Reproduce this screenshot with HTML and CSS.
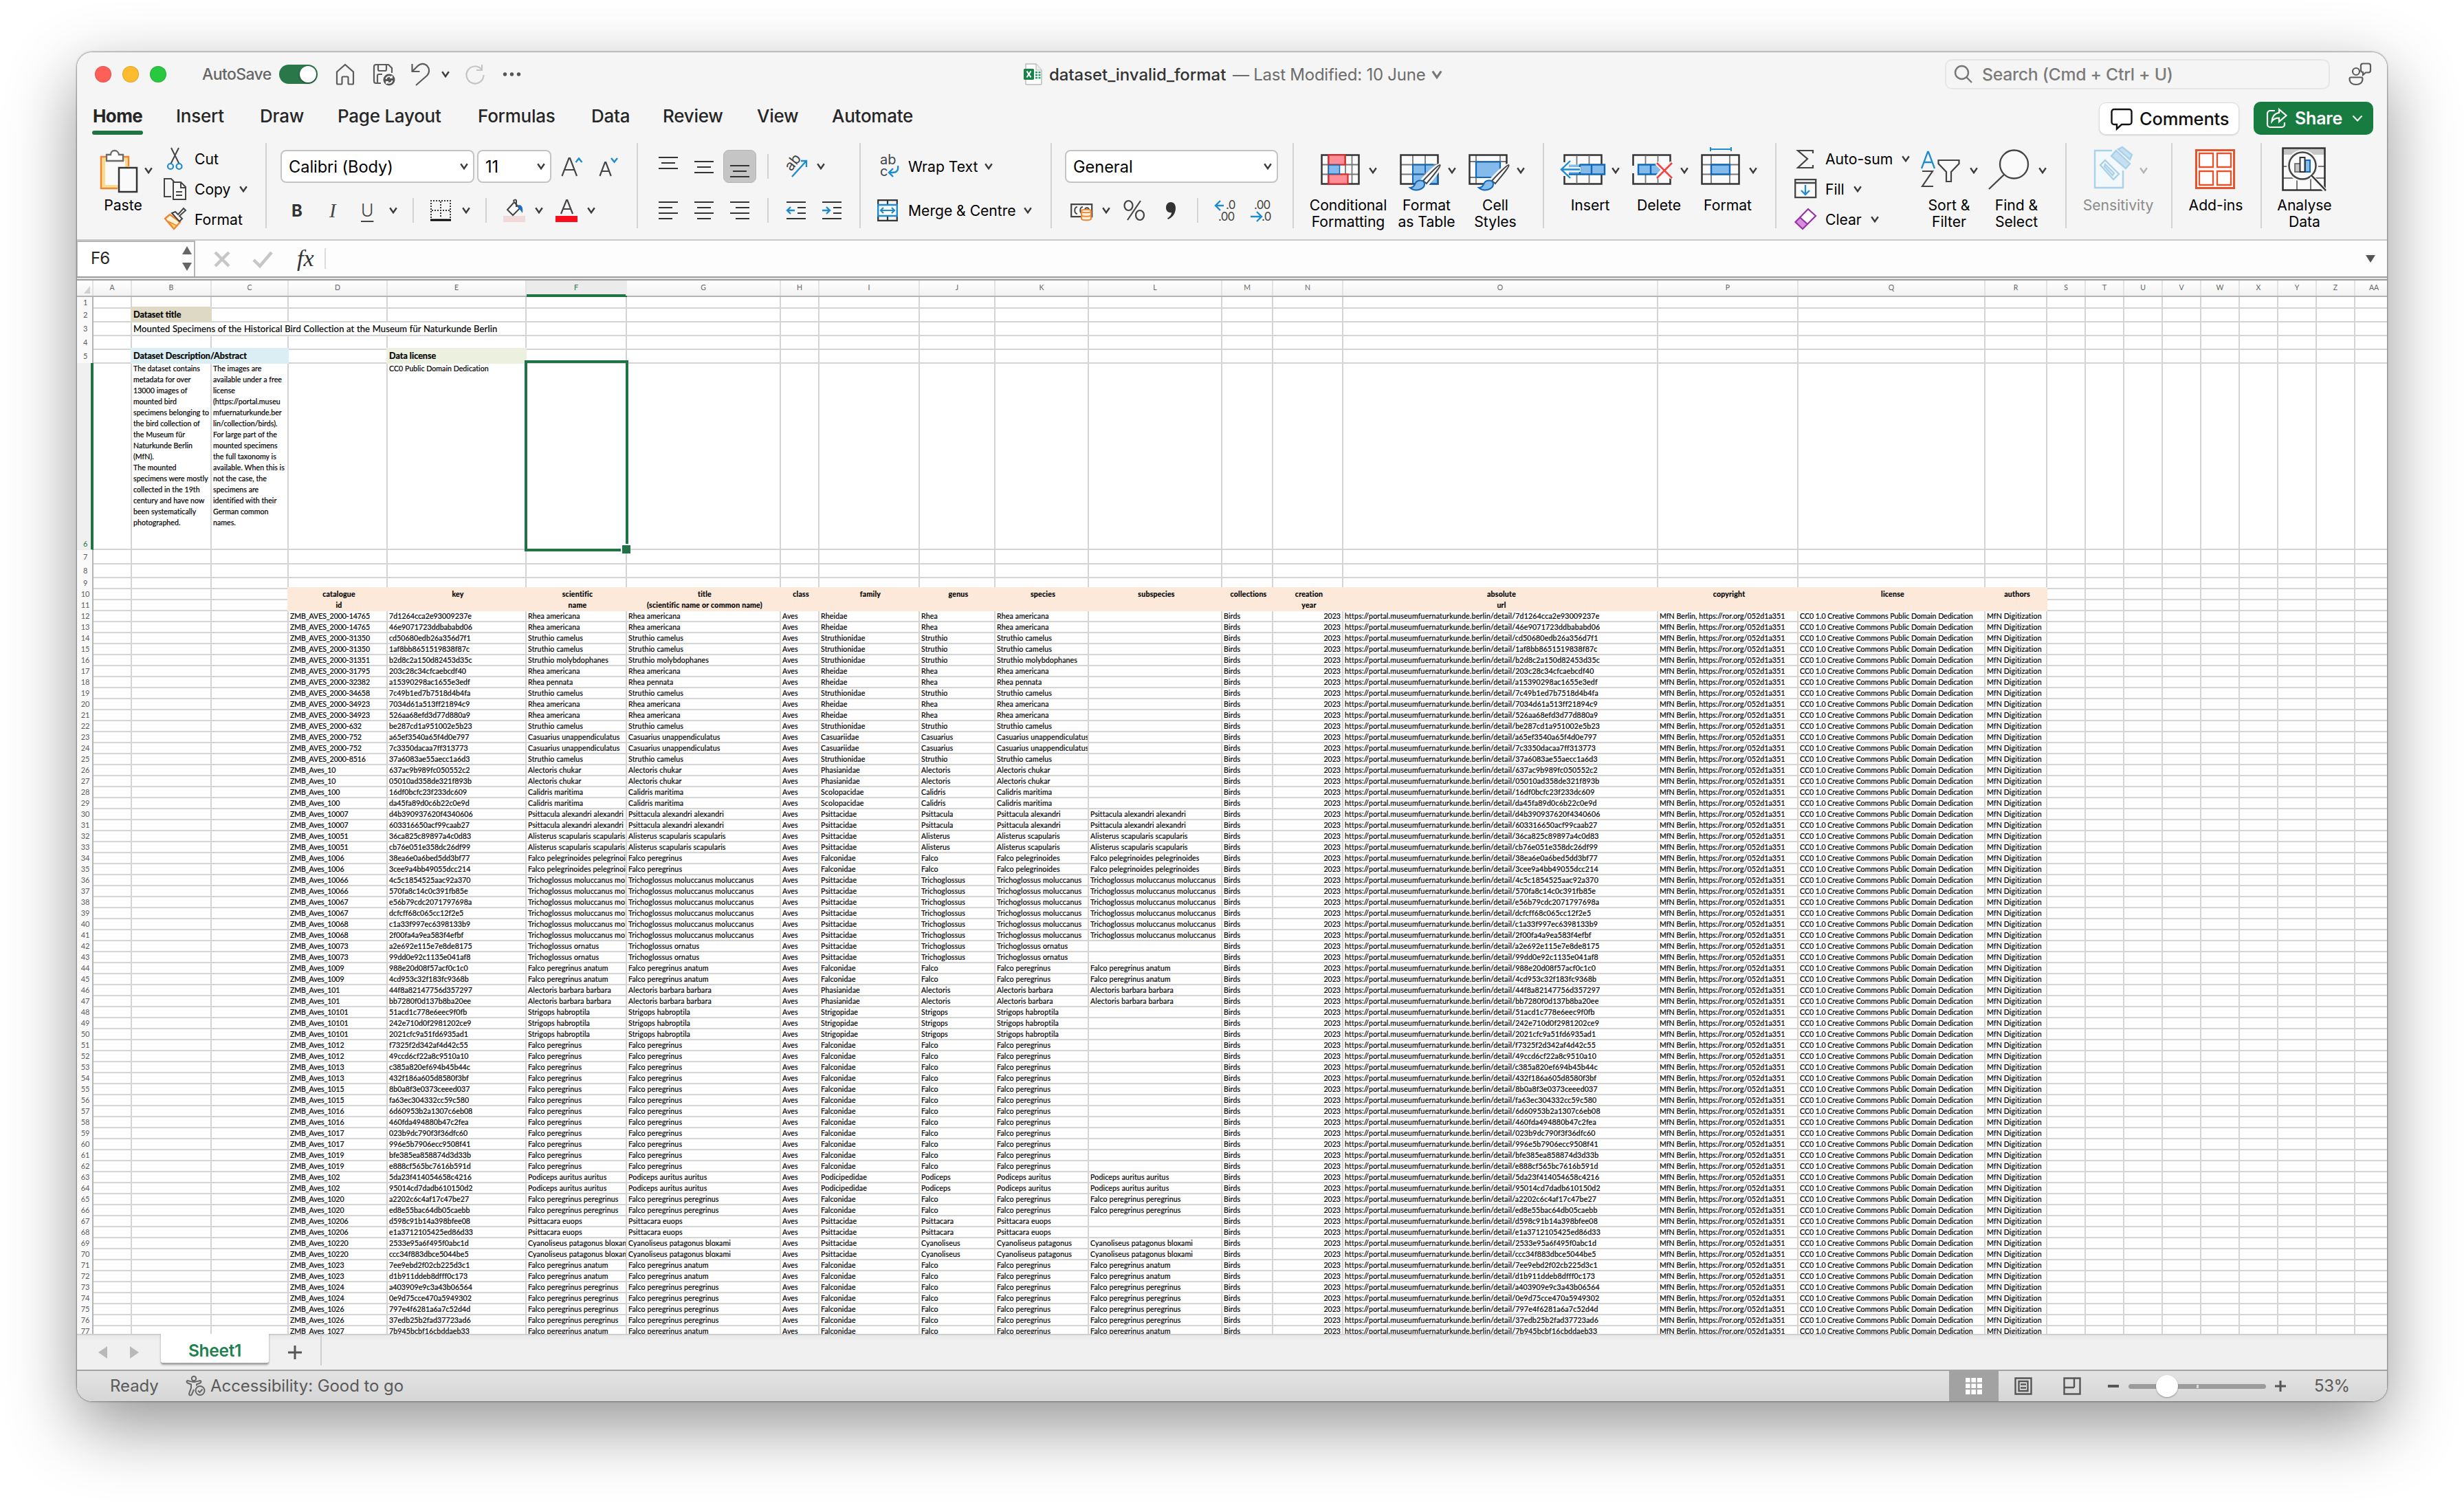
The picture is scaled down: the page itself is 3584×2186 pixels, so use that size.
FILE: index.html
```html
<!DOCTYPE html>
<html lang="en">
<head>
<meta charset="utf-8">
<title>dataset_invalid_format</title>
<link rel="stylesheet" href="styles.css">
</head>
<body>
<svg class="defs" aria-hidden="true">
  <symbol id="chev" viewBox="0 0 12 10"><path d="M1.2 1.2 6 8.2l4.8-7" fill="none" stroke="currentColor" stroke-width="2.4"/></symbol>
</svg>
<div class="window">

  <header class="titlebar">
    <span class="light red"></span><span class="light yellow"></span><span class="light green"></span>
    <span class="autosave">AutoSave</span>
    <span class="toggle"><span class="knob"></span></span>
    <svg class="tool" width="28" height="32" viewBox="0 0 28 32"><path d="M2 12.500 14 2l12 10.500V29a1.500 1.500 0 0 1-1.500 1.500H20a1.500 1.500 0 0 1-1.500-1.500v-8a1.500 1.500 0 0 0-1.500-1.500h-6A1.500 1.500 0 0 0 9.500 21v8A1.500 1.500 0 0 1 8 30.500H3.500A1.500 1.500 0 0 1 2 29z"/></svg>
    <svg class="tool" width="34" height="34" viewBox="0 0 34 34"><path d="M12 30H5a3 3 0 0 1-3-3V6a3 3 0 0 1 3-3h18l5 5v7M8 3v7a2 2 0 0 0 2 2h8a2 2 0 0 0 2-2V3M7 30V19a2 2 0 0 1 2-2h5"/><circle cx="24" cy="25" r="8.500" fill="#555" stroke="none"/><path stroke="#f5f5f5" stroke-width="1.800" d="M19.500 24a4.700 4.700 0 0 1 8-2.500M28 19v3h-3M28.500 26a4.700 4.700 0 0 1-8 2.500M20 31v-3h3"/></svg>
    <svg class="tool" width="28" height="34" viewBox="0 0 28 34"><path d="M1.500 2v11h11M2 12.500 9.500 5C14 .500 20 1 23.500 5s3.500 10-.500 14L7 33"/></svg>
    <svg class="chev"><use href="#chev"/></svg>
    <svg class="tool pale" width="30" height="32" viewBox="0 0 30 32"><path d="M25 2v8h-8M25 9.500A12.500 12.500 0 1 0 27.500 17"/></svg>
    <svg width="28" height="8" viewBox="0 0 28 8" fill="#555"><circle cx="3.500" cy="4" r="2.700"/><circle cx="13.500" cy="4" r="2.700"/><circle cx="23.500" cy="4" r="2.700"/></svg>
    <svg width="28" height="34" viewBox="0 0 28 34"><path d="M3 2h15l8 9v20a1 1 0 0 1-1 1H4a1 1 0 0 1-1-1z" fill="#fff" stroke="#bbb" stroke-width="1.500"/><path d="M18 2v9h8" fill="#eee" stroke="#bbb" stroke-width="1.200"/><path d="M17 13h3v2.500h-3zm4.500 0h3v2.500h-3zM17 17h3v2.500h-3zm4.500 0h3v2.500h-3zM17 21h3v2.500h-3zm4.500 0h3v2.500h-3z" fill="#21a366"/><rect x="0" y="9" width="15" height="16" rx="1.500" fill="#17824a"/><path d="m4.500 12.500 6 9m0-9-6 9" stroke="#fff" stroke-width="2.200"/></svg>
    <span class="doc">dataset_invalid_format</span>
    <span class="modified">— Last Modified: 10 June</span>
    <svg class="chev wide"><use href="#chev"/></svg>
    <div class="search"><svg width="28" height="28" viewBox="0 0 28 28" fill="none" stroke="#777" stroke-width="2.400"><circle cx="11.500" cy="11.500" r="9.500"/><path d="m18.500 18.500 7.500 7.500"/></svg><span>Search (Cmd + Ctrl + U)</span></div>
    <svg class="tool" width="34" height="34" viewBox="0 0 34 34"><circle cx="11" cy="13" r="5"/><path d="M3.500 21.500h15a2 2 0 0 1 2 2c0 5.500-4 8.500-9.500 8.500s-9.500-3-9.500-8.500a2 2 0 0 1 2-2zM21 1.500h8a3 3 0 0 1 3 3v7a3 3 0 0 1-3 3h-4l-4 3.500v-4a3 3 0 0 1-3-3v-6.500a3 3 0 0 1 3-3z"/></svg>
  </header>

  <nav class="tabs">
    <span class="tab active">Home</span><span class="tab">Insert</span><span class="tab">Draw</span><span class="tab">Page Layout</span><span class="tab">Formulas</span><span class="tab">Data</span><span class="tab">Review</span><span class="tab">View</span><span class="tab">Automate</span>
    <div class="comments"><svg width="32" height="32" viewBox="0 0 32 32" fill="none" stroke="#111" stroke-width="2.400"><path d="M5 2h22a3.500 3.500 0 0 1 3.500 3.500v15A3.500 3.500 0 0 1 27 24H16l-7 6.500V24H5a3.500 3.500 0 0 1-3.500-3.500v-15A3.500 3.500 0 0 1 5 2z"/></svg><span>Comments</span></div>
    <div class="share"><svg width="32" height="30" viewBox="0 0 32 30" fill="none" stroke="#fff" stroke-width="2.200"><path d="M13 4H6a4 4 0 0 0-4 4v16a4 4 0 0 0 4 4h17a4 4 0 0 0 4-4v-3M19 2l10.500 9L19 20v-5.500c-5 0-8 1.500-10.500 5C9 12.500 13 7.500 19 7z"/></svg><span>Share</span><svg class="chev-share" width="16" height="10" viewBox="0 0 16 10"><path d="m1.500 1.500 6.500 7 6.500-7" fill="none" stroke="#fff" stroke-width="2"/></svg></div>
  </nav>

  <section class="ribbon">
    <div class="group clipboard">
      <div class="big"><div class="art">
        <svg width="70" height="64" viewBox="0 0 70 64"><path d="M8 15h38v45H8z" fill="#f9dc93"/><path d="M13 20h29v35H13z" fill="#fafafa"/><path d="M47 28V14H7v46h24" fill="none" stroke="#ed8733" stroke-width="2.500"/><path d="M15 11h6c0-8 11-8 12 0h6v9H15z" fill="#fff" stroke="#6a6a6a" stroke-width="2.300"/><path d="M33 30h26v35H33z" fill="#fafafa" stroke="#333" stroke-width="2.500"/></svg>
        <svg class="chev"><use href="#chev"/></svg></div><div class="label">Paste</div></div>
      <div class="stack">
        <div class="line"><svg width="34" height="34" viewBox="0 0 34 34" fill="none"><path d="m11 1 11.500 23M22 1 10.500 24" stroke="#444" stroke-width="2"/><circle cx="10" cy="28" r="4" stroke="#1e8bcd" stroke-width="2.200"/><circle cx="22.500" cy="28" r="4" stroke="#1e8bcd" stroke-width="2.200"/></svg><span>Cut</span></div>
        <div class="line"><svg width="34" height="34" viewBox="0 0 34 34" fill="none" stroke="#444" stroke-width="2"><path d="M11 28H1V2h10l4 4"/><path fill="#f8f8f8" d="M14 7h11l7 7v18H14z"/><path d="M25 7v8h7M18 21h9M18 26h9"/></svg><span>Copy</span><svg class="chev"><use href="#chev"/></svg></div>
        <div class="line"><svg width="34" height="34" viewBox="0 0 34 34" fill="none"><path d="M9 10 2 16l13 15 9-10z" fill="#fff3d6" stroke="#ed8733" stroke-width="2.400"/><path d="m7 20 12 6-4 5z" fill="#fbd06b" stroke="#ed8733" stroke-width="1.500"/><path d="m12 8 11 12 4-4-4-4 9-8-3-3-8 9-4-4z" fill="#fafafa" stroke="#444" stroke-width="2"/></svg><span>Format</span></div>
      </div>
    </div>

    <div class="group font">
      <div class="row top">
        <div class="field">Calibri (Body)<svg class="chev"><use href="#chev"/></svg></div>
        <div class="field">11<svg class="chev"><use href="#chev"/></svg></div>
        <svg width="34" height="32" viewBox="0 0 34 32" fill="none"><path d="m1.500 30 10-26h1.500l10 26M5 21h14" stroke="#444" stroke-width="2.200"/><path d="m21.500 10 4.500-5.500 4.500 5.500" stroke="#1e8bcd" stroke-width="2.400"/></svg>
        <svg width="34" height="32" viewBox="0 0 34 32" fill="none"><path d="m1.500 30 7.500-20h1.200l7.500 20M4.500 23h11" stroke="#444" stroke-width="2.200"/><path d="m18 4 4.500 5.500L27 4" stroke="#1e8bcd" stroke-width="2.400"/></svg>
      </div>
      <div class="row bottom">
        <span class="b">B</span><span class="i">I</span><span class="u">U</span><svg class="chev"><use href="#chev"/></svg>
        <i class="sep"></i>
        <svg width="30" height="32" viewBox="0 0 30 32" fill="none" stroke="#333"><path stroke-width="2" stroke-dasharray="2 2" d="M1 27V2h28v25M15 3v24M2 16h27"/><path stroke="#000" stroke-width="3" d="M0 30h30"/></svg>
        <svg class="chev"><use href="#chev"/></svg>
        <i class="sep"></i>
        <svg width="34" height="34" viewBox="0 0 34 34" fill="none"><path d="M0 25h32v9H0z" fill="#f1d9d9"/><path d="m16 5-10 11 8 8 10-10zM19 12V3c0-2-4-2-4 1" stroke="#444" stroke-width="2" fill="#fafafa"/><path d="M22 9c5 0 7 3 6 12-2-3-3-5-6-7z" fill="#1e6fbe"/></svg>
        <svg class="chev"><use href="#chev"/></svg>
        <svg width="34" height="34" viewBox="0 0 34 34" fill="none"><path d="M0 25h32v9H0z" fill="#fc0d1b"/><path d="m8 22 8-20h1.200L25 22M11 15h11" stroke="#444" stroke-width="2.200"/></svg>
        <svg class="chev"><use href="#chev"/></svg>
      </div>
    </div>

    <div class="group align">
      <div class="row top">
        <svg class="ln" viewBox="0 0 28 32"><path d="M0 3h28M4 11h20M0 19h28"/></svg>
        <svg class="ln" viewBox="0 0 28 32"><path d="M0 9h28M4 17h20M0 25h28"/></svg>
        <div class="pressed"><svg class="ln" viewBox="0 0 28 32"><path d="M0 15h28M4 23h20M0 31h28"/></svg></div>
        <i class="sep"></i>
        <svg width="36" height="34" viewBox="0 0 36 34"><text x="0" y="0" transform="translate(10 25) rotate(-52)" font-family="Inter" font-size="21" fill="#444">ab</text><path d="m11 32 20-22M24 9h8v9" fill="none" stroke="#1e8bcd" stroke-width="2.300"/></svg>
        <svg class="chev"><use href="#chev"/></svg>
      </div>
      <div class="row bottom">
        <svg class="ln" viewBox="0 0 28 32"><path d="M0 4h28M0 12h20M0 20h28M0 28h20"/></svg>
        <svg class="ln" viewBox="0 0 28 32"><path d="M0 4h28M4 12h20M0 20h28M4 28h20"/></svg>
        <svg class="ln" viewBox="0 0 28 32"><path d="M0 4h28M8 12h20M0 20h28M8 28h20"/></svg>
        <i class="sep"></i>
        <svg class="ln" viewBox="0 0 28 32"><path d="M0 4h28M16 12h12M16 20h12M0 28h28"/><path class="blue" d="M12 16H2M6 11l-5 5 5 5"/></svg>
        <svg class="ln" viewBox="0 0 28 32"><path d="M0 4h28M16 12h12M16 20h12M0 28h28"/><path class="blue" d="M0 16h10M6 11l5 5-5 5"/></svg>
      </div>
    </div>

    <div class="group wrap">
      <div class="row top">
        <svg width="30" height="34" viewBox="0 0 30 34"><text x="0" y="14" font-family="Inter" font-size="20" fill="#444">ab</text><text x="0" y="31" font-family="Inter" font-size="20" fill="#444">c</text><path d="M26 16c1 6-1 10-8 10h-5M19 20l-6 6 6 6" fill="none" stroke="#1e8bcd" stroke-width="2.400"/></svg>
        <span class="t">Wrap Text</span><svg class="chev"><use href="#chev"/></svg>
      </div>
      <div class="row bottom">
        <svg width="30" height="32" viewBox="0 0 30 32" fill="none"><path d="M1.200 1.200h27.600v29.600H1.200zM15 1v7M15 24v7" stroke="#333" stroke-width="2.200"/><path d="M1.200 8h27.600v16H1.200z" fill="#fafafa" stroke="#1e8bcd" stroke-width="2.400"/><path d="M5 16h20M9 12l-4 4 4 4M21 12l4 4-4 4" stroke="#1e8bcd" stroke-width="2.200"/></svg>
        <span class="t">Merge &amp; Centre</span><svg class="chev"><use href="#chev"/></svg>
      </div>
    </div>

    <div class="group number">
      <div class="row top"><div class="field">General<svg class="chev"><use href="#chev"/></svg></div></div>
      <div class="row bottom">
        <svg width="34" height="34" viewBox="0 0 34 34" fill="none"><path d="M1.200 8.200h30v18H1.200z" stroke="#444" stroke-width="2.200" fill="#fafafa"/><path d="M10 12c-5 0-5 10 0 10M18 12c-5 0-5 10 0 10M21 17c0-5 6-5 6 0" stroke="#444" stroke-width="2"/><path d="M16 18v11c0 3 14 3 14 0V18c0-3-14-3-14 0z" fill="#fff0dc" stroke="#ed8733" stroke-width="2"/><path d="M16 18c0 3 14 3 14 0M16 23.500c0 3 14 3 14 0" stroke="#ed8733" stroke-width="2"/></svg>
        <svg class="chev"><use href="#chev"/></svg>
        <svg width="32" height="32" viewBox="0 0 32 32" fill="none" stroke="#444" stroke-width="2.200"><ellipse cx="7.500" cy="9" rx="6" ry="7"/><ellipse cx="24" cy="23" rx="6" ry="7"/><path d="M25 2 6 30"/></svg>
        <svg width="18" height="32" viewBox="0 0 18 32"><path d="M8 4c4.500 0 7 3.500 7 8.500C15 20 11 26 4 29l-1-1.500c4-2.500 6-5.500 6-8.500-5 1-8-2.500-8-7S4 4 8 4z" fill="#333"/></svg>
        <i class="sep"></i>
        <svg class="dec" width="32" height="36" viewBox="0 0 32 36"><text x="16" y="16">.0</text><text x="5" y="33">.00</text><path d="M13 11H2M8 4l-7 7 7 7"/></svg>
        <svg class="dec" width="32" height="36" viewBox="0 0 32 36"><text x="5" y="16">.00</text><text x="16" y="33">.0</text><path d="M0 27h14M9 20l7 7-7 7"/></svg>
      </div>
    </div>

    <div class="group styles">
      <div class="big"><div class="art"><svg width="70" height="64" viewBox="0 0 70 64" fill="none"><path d="M1.500 11.500h54v42h-54z" fill="#fafafa"/><path d="M1 25.500h55M1 39.500h55M11 11v42M36 11v42M45.500 11v42" stroke="#777" stroke-width="1.800"/><path d="M1.500 11.500h54v42h-54z" stroke="#333" stroke-width="2.500"/><path d="M11.500 11.500h24v14h-24zM11.500 39.500h28v14h-28z" fill="#ff8f96" stroke="#d92b2b" stroke-width="2.200"/><path d="M11.500 26h16v13h-16z" fill="#84bbea" stroke="#1168b8" stroke-width="1.500"/></svg><svg class="chev"><use href="#chev"/></svg></div><div class="label">Conditional<br>Formatting</div></div>
      <div class="big"><div class="art"><svg width="70" height="64" viewBox="0 0 70 64" fill="none"><path d="M1.500 11.500h54v42h-54z" fill="#fafafa"/><path d="M19 25.500h36.500v28H19z" fill="#84bbea"/><path d="M1 25.500h55M1 39.500h55M19 11v42M37 11v42" stroke="#777" stroke-width="1.800"/><path d="M1.500 11.500h54v42h-54z" stroke="#333" stroke-width="2.500"/><path d="M55.500 40v13.500H34M19 53V25.500h30M19 39.500h16M37 25v12" stroke="#1168b8" stroke-width="2"/><path d="M59 26c3 2-14 22-20 29l-7-6c8-9 24-25 27-23z" fill="#fff" stroke="#f5f5f5" stroke-width="5"/><path d="M58.500 26c2 2-14 20-19.500 27l-5-4c8-9 23-24 24.500-23z" fill="#fff" stroke="#444" stroke-width="2"/><path d="M15 59c5 0 6-3 8-7 3-5 13-5 13 2s-13 12-21 5z" fill="#84bbea" stroke="#1168b8" stroke-width="2"/></svg><svg class="chev"><use href="#chev"/></svg></div><div class="label">Format<br>as Table</div></div>
      <div class="big"><div class="art"><svg width="70" height="64" viewBox="0 0 70 64" fill="none"><path d="M1.500 11.500h54v42h-54z" fill="#fafafa"/><path d="M1 21h55M1 44h55M11 11v42M46 11v42" stroke="#777" stroke-width="1.800"/><path d="M1.500 11.500h54v42h-54z" stroke="#333" stroke-width="2.500"/><path d="M11 21.500h35V44H11z" fill="#84bbea" stroke="#1168b8" stroke-width="2.200"/><path d="M59 26c3 2-14 22-20 29l-7-6c8-9 24-25 27-23zM57 34v22H42z" fill="#f5f5f5" stroke="#f5f5f5" stroke-width="5"/><path d="M58.500 26c2 2-14 20-19.500 27l-5-4c8-9 23-24 24.500-23z" fill="#fff" stroke="#444" stroke-width="2"/><path d="M15 59c5 0 6-3 8-7 3-5 13-5 13 2s-13 12-21 5z" fill="#84bbea" stroke="#1168b8" stroke-width="2"/></svg><svg class="chev"><use href="#chev"/></svg></div><div class="label">Cell<br>Styles</div></div>
    </div>

    <div class="group cells">
      <div class="big"><div class="art"><svg width="70" height="64" viewBox="0 0 70 64" fill="none"><path d="M1.500 11.500h54v42h-54z" fill="#fafafa" stroke="#333" stroke-width="2.500"/><path d="M19.500 12v41M37.500 12v41" stroke="#777" stroke-width="1.800"/><path d="M-3 22h12v20H-3z" fill="#f5f5f5"/><path d="M8 25.500h52v14H8z" fill="#84bbea"/><path d="M24 25.500h36v14H8M24 25v14M41 25v14" stroke="#1168b8" stroke-width="2.400"/><path d="M-2 32.500h27" stroke="#f5f5f5" stroke-width="7"/><path d="M-2 32.500h26M10 20-3 32.500 10 45" stroke="#1e8bcd" stroke-width="2.400"/></svg><svg class="chev"><use href="#chev"/></svg></div><div class="label">Insert</div></div>
      <div class="big"><div class="art"><svg width="70" height="64" viewBox="0 0 70 64" fill="none"><path d="M1.500 11.500h54v42h-54z" fill="#fafafa" stroke="#333" stroke-width="2.500"/><path d="M19.500 12v41M37.500 12v41" stroke="#777" stroke-width="1.800"/><path d="M-3 27h12v11H-3zM36 27h22v11H36z" fill="#f5f5f5"/><path d="M9 25.500h27l6 7-6 7H9z" fill="#84bbea"/><path d="M37 25.500H9v14h28M27 25v14" stroke="#1168b8" stroke-width="2.400"/><path d="m36 23 22 21m0-21L36 44" stroke="#f5f5f5" stroke-width="7"/><path d="m36 23 22 22m0-22L36 45" stroke="#ee4444" stroke-width="2.600"/></svg><svg class="chev"><use href="#chev"/></svg></div><div class="label">Delete</div></div>
      <div class="big"><div class="art"><svg width="70" height="64" viewBox="0 0 70 64" fill="none"><path d="M1.500 11.500h54v42h-54z" fill="#fafafa"/><path d="M1 25.500h55M1 39.500h55M15 11v42M42 11v42" stroke="#777" stroke-width="1.800"/><path d="M1.500 11.500h54v42h-54z" stroke="#333" stroke-width="2.500"/><path d="M15 25.500h27v14H15z" fill="#84bbea" stroke="#1168b8" stroke-width="2.400"/><path d="M14 3h30M14 0v6M44 0v6" stroke="#1e8bcd" stroke-width="2"/></svg><svg class="chev"><use href="#chev"/></svg></div><div class="label">Format</div></div>
    </div>

    <div class="group editing">
      <div class="stack">
        <div class="line"><svg width="34" height="34" viewBox="0 0 34 34" fill="none"><path d="M27 9V5H5l14 12L5 30h22v-4" stroke="#444" stroke-width="2.200"/></svg><span>Auto-sum</span><svg class="chev"><use href="#chev"/></svg></div>
        <div class="line"><svg width="34" height="34" viewBox="0 0 34 34" fill="none"><path d="M1.200 3.200h30v26h-30zM1 8h30" stroke="#444" stroke-width="2.300" fill="#fafafa"/><path d="M16 11v14M10 19l6 6 6-6" stroke="#1e8bcd" stroke-width="2.300"/></svg><span>Fill</span><svg class="chev"><use href="#chev"/></svg></div>
        <div class="line"><svg width="34" height="34" viewBox="0 0 34 34" fill="none"><path d="M20 2 1.500 21 12 31 31 12z" fill="#fff"/><path d="M8 14 1.500 21 12 31l7-7z" fill="#d68fdb"/><path d="M20 2 1.500 21 12 31 31 12zM8 14l11 10" stroke="#9a31a6" stroke-width="2.200"/></svg><span>Clear</span><svg class="chev"><use href="#chev"/></svg></div>
      </div>
      <div class="big"><div class="art"><svg width="70" height="64" viewBox="0 0 70 64" fill="none"><path d="M0 31 9 7h1l9 24M3.500 22h12" stroke="#1e8bcd" stroke-width="2.300"/><path d="M1 35h15L1 57h16" stroke="#444" stroke-width="2.200"/><path d="M24.500 19h30v5L43 36v14h-7V36L24.500 24z" fill="#fafafa" stroke="#444" stroke-width="2.200"/></svg><svg class="chev"><use href="#chev"/></svg></div><div class="label">Sort &amp;<br>Filter</div></div>
      <div class="big"><div class="art"><svg width="72" height="64" viewBox="0 0 72 64" fill="none" stroke="#444" stroke-width="2.300"><circle cx="36.500" cy="25" r="20.500" fill="#fafafa"/><path d="M22 40 0 61"/></svg><svg class="chev"><use href="#chev"/></svg></div><div class="label">Find &amp;<br>Select</div></div>
    </div>

    <div class="group sens">
      <div class="big dim"><div class="art"><svg width="70" height="64" viewBox="0 0 70 64" fill="none" stroke="#a9d1e9" stroke-width="2.400"><path d="M30 5H5v54h41V34" fill="#f3f8fb"/><path d="m36 5 20 19-6 7-21-18zM39 3l6-3 14 11-3 7z" fill="#c4e0f1"/><path d="m20 19 20 20-8 8-19-21z" fill="#f5f5f5"/><path d="m20 25 13 13-2 3-12-13z"/></svg><svg class="chev"><use href="#chev"/></svg></div><div class="label">Sensitivity</div></div>
    </div>
    <div class="group addins">
      <div class="big"><div class="art"><svg width="58" height="64" viewBox="0 0 58 64" fill="none" stroke="#e5532d"><path d="M1.500 4.500h55v55h-55z" stroke-width="3" fill="#fff"/><path d="M6 9h20v20H6zM32 9h20v20H32zM6 35h20v20H6zM32 35h20v20H32z" stroke-width="2.300"/></svg></div><div class="label">Add-ins</div></div>
    </div>
    <div class="group analyse">
      <div class="big"><div class="art"><svg width="64" height="64" viewBox="0 0 64 64" fill="none"><path d="M1.500 1.500h61v61h-61z" fill="#fafafa"/><path d="M2 2h60v9H2z" fill="#c6c6c6"/><path d="M1 28h62M1 45h62M22 28v34M42 28v34" stroke="#777" stroke-width="2"/><path d="M1.500 1.500h61v61h-61z" stroke="#333" stroke-width="2.600"/><circle cx="30" cy="27" r="23" fill="#f5f5f5"/><circle cx="30" cy="27" r="19.500" fill="#fafafa" stroke="#444" stroke-width="2.500"/><path d="m43 42 20 21" stroke="#f5f5f5" stroke-width="6"/><path d="m43 41 21 22" stroke="#333" stroke-width="2.500"/><path d="M19 24h8v12h-8z" fill="#c6c6c6" stroke="#555" stroke-width="1.500"/><path d="M34 19h7v17h-7z" fill="#84bbea" stroke="#1168b8" stroke-width="2"/><path d="M26.500 15h7v21h-7z" fill="#fafafa" stroke="#333" stroke-width="2"/></svg></div><div class="label">Analyse<br>Data</div></div>
    </div>
  </section>

  <section class="formula">
    <div class="namebox"><span>F6</span><svg width="14" height="36" viewBox="0 0 14 36"><path d="M7 0l7 12H0zM7 36l7-12H0z" fill="#666"/></svg></div>
    <svg width="26" height="26" viewBox="0 0 26 26"><path d="m2 4 20 20m0-20L2 24" stroke="#c6c6c6" stroke-width="4.500"/></svg>
    <svg width="30" height="26" viewBox="0 0 30 26"><path d="m2 15 9 9L28 4" fill="none" stroke="#c6c6c6" stroke-width="4.500"/></svg>
    <span class="fx">fx</span>
    <i class="fsep"></i>
    <svg width="14" height="11" viewBox="0 0 14 11"><path d="M0 0h14L7 11z" fill="#555"/></svg>
  </section>
  <div class="splitter"></div>

  <main class="sheet" id="sheet"></main>

  <section class="sheets">
    <svg width="14" height="18" viewBox="0 0 14 18"><path d="M13 0v18L0 9z" fill="#b9b9b9"/></svg>
    <svg width="14" height="18" viewBox="0 0 14 18"><path d="M1 0v18l13-9z" fill="#b9b9b9"/></svg>
    <div class="sheet-tab">Sheet1</div>
    <svg width="22" height="22" viewBox="0 0 22 22"><path d="M11 1v20M1 11h20" stroke="#555" stroke-width="3"/></svg>
    <i class="tsep"></i>
  </section>

  <footer class="status">
    <span>Ready</span>
    <svg width="32" height="32" viewBox="0 0 32 32" fill="none" stroke="#666" stroke-width="2"><circle cx="12" cy="5" r="3.200"/><path d="M2 8c-1 2 0 3 1 3.500l5 2v5L5 27c0 3 3 3 4 1l3-7M22 8c1 2 0 3-1 3.500l-5 2v2M2 8c3 0 6 2 10 2s7-2 10-2"/><circle cx="21" cy="22.500" r="6.500"/><path d="m18 22.500 2.500 2.500 4-4.500"/></svg>
    <span class="acc">Accessibility: Good to go</span>
    <div class="view on"><svg width="26" height="26" viewBox="0 0 26 26"><path d="M1 1h24v24H1z" fill="#fff"/><path d="M1 8.500h24M1 17h24M8.500 1v24M17 1v24" stroke="#a2a2a2" stroke-width="1.800"/></svg></div>
    <svg width="26" height="26" viewBox="0 0 26 26" fill="none" stroke="#555" stroke-width="2.400"><path d="M1.500 1.500h23v23h-23zM6.500 6h13v14h-13zM9 10.500h8M9 15.500h8"/></svg>
    <svg width="26" height="26" viewBox="0 0 26 26" fill="none" stroke="#555" stroke-width="2.400"><path d="M1.500 1.500h23v23h-23zM16 1v14M1 15h15"/></svg>
    <svg width="16" height="4" viewBox="0 0 16 4"><path d="M0 0h16v4H0z" fill="#555"/></svg>
    <div class="track"><i class="tick"></i><i class="thumb"></i></div>
    <svg width="18" height="18" viewBox="0 0 18 18"><path d="M9 1v16M1 9h16" stroke="#555" stroke-width="3"/></svg>
    <span class="pct">53%</span>
  </footer>
</div>
<script src="sheet.js"></script>
</body>
</html>
```

FILE: styles.css
```css
* { box-sizing: border-box; }
body { margin: 0; background: #fff; font-family: Inter, "Liberation Sans", sans-serif; }
svg { display: block; overflow: visible; flex: none; }
.defs { position: absolute; width: 0; height: 0; }
.window {
  width: 3360px; height: 1962px; margin: 76px 0 0 112px; border-radius: 22px; overflow: hidden;
  background: #f5f5f5; display: flex; flex-direction: column; color: #262626;
}
body::before {
  content: ""; position: absolute; z-index: -1; left: 112px; top: 76px; width: 3360px; height: 1962px;
  border-radius: 22px; box-shadow: 0 0 2px 1px rgba(0,0,0,.38), 0 36px 100px rgba(0,0,0,.42);
}
.chev { width: 12px; height: 10px; color: #3b3b3b; }
.chev.wide { width: 16px; height: 13px; color: #777; }

/* title bar */
.titlebar {
  flex: none; height: 64px; padding-left: 26px; display: grid; align-items: center; white-space: nowrap;
  grid-template-columns: 40px 40px 77px 111px 82px 54px 56px 44px 34px 55px 758px 38px 266px 289px 747px 587px 56px;
}
.light { width: 24px; height: 24px; border-radius: 50%; border: 1px solid rgba(0,0,0,.12); }
.red { background: #fe5f57; } .yellow { background: #febb2e; } .green { background: #28c840; }
.autosave { font-size: 23px; letter-spacing: -.6px; color: #666; font-weight: 500; margin-left: -1px; }
.toggle { width: 56px; height: 28px; border-radius: 14px; background: #2a774a; display: flex; justify-content: flex-end; padding: 2px; }
.knob { width: 24px; height: 24px; border-radius: 50%; background: #fff; box-shadow: 0 1px 3px rgba(0,0,0,.5); }
.tool { fill: none; stroke: #5c5c5c; stroke-width: 2.2; }
.tool.pale { stroke: #c4c4c4; }
.doc { font-size: 24px; font-weight: 500; letter-spacing: -.06px; color: #333; margin-left: -1px; }
.modified { font-size: 24px; letter-spacing: -.25px; color: #6c6c6c; }
.search {
  width: 560px; height: 44px; border: 2px solid #e6e6e6; border-radius: 10px; display: flex; align-items: center;
  padding-left: 11px; gap: 13px; font-size: 24.800px; font-weight: 500; letter-spacing: -.3px; color: #7b7b7b;
}

/* tabs */
.tabs {
  flex: none; height: 68px; padding-left: 23px; display: grid; align-items: start; white-space: nowrap;
  grid-template-columns: 122px 122px 113px 204px 165px 104px 137px 109px 1842px 225px 174px;
}
.tab { font-size: 26px; font-weight: 500; letter-spacing: -.25px; line-height: 58px; height: 58px; justify-self: start; margin-left: -1px; }
.tab.active { font-weight: 700; letter-spacing: -.6px; position: relative; margin-left: 0; }
.tab.active::after { content: ""; position: absolute; left: -1px; right: -1px; bottom: 2px; height: 6px; border-radius: 3px; background: #217346; }
.comments, .share { display: flex; align-items: center; border-radius: 10px; font-size: 25.500px; }
.comments { width: 204px; height: 47px; margin-top: 9px; padding-left: 16px; gap: 10px; background: #fff; border: 1px solid #dcdcdc; box-shadow: 0 1px 2px rgba(0,0,0,.15); color: #111; font-weight: 500; letter-spacing: -.2px; }
.share { width: 174px; height: 48px; margin-top: 8px; padding-left: 18px; gap: 10px; background: #187c41; color: #fff; font-weight: 600; font-size: 25px; letter-spacing: -.2px; }
.chev-share { margin-left: 4px; }

/* ribbon */
.ribbon { flex: none; height: 142px; display: flex; border-bottom: 2px solid #c8c8c8; color: #000; font-size: 21.200px; letter-spacing: -.05px; white-space: nowrap; }
.group { height: 124px; border-right: 2px solid #d3d3d3; }
.row { display: grid; align-items: center; height: 48px; }
.row.top { margin-top: 10px; }
.row.bottom { margin-top: 16px; }
.sep { width: 2px; height: 36px; background: #d3d3d3; }
.clipboard { width: 276px; padding-left: 17px; display: grid; grid-template-columns: 109px 148px; }
.stack { padding-top: 1px; }
.line { height: 44px; display: grid; grid-template-columns: 45px auto auto; justify-content: start; align-items: center; }
.line .chev { margin-left: 13px; }
.big { width: 100px; padding-top: 6px; }
.art { height: 72px; display: flex; padding-left: 11px; }
.art .chev { margin-top: 29px; }
.label { line-height: 24px; text-align: center; margin: 0 -12px; }
.font { width: 540px; }
.font .top { padding-left: 20px; grid-template-columns: 286px 122px 55px 36px; }
.font .bottom { padding-left: 36px; grid-template-columns: 54px 47px 41px 34px 26px 46px 34px 26px 46px 30px 46px 14px; }
.field {
  height: 48px; border: 2px solid #c4c4c4; border-radius: 8px; background: #fff; display: flex; align-items: center;
  justify-content: space-between; padding: 0 7px 0 10px; font-size: 23.600px; width: 282px;
}
.font .field + .field { width: 108px; }
.number .field { width: 310px; }
.b { font-size: 24px; font-weight: 700; color: #333; }
.i { font: italic 29px "Liberation Serif", serif; color: #444; padding-left: 1px; }
.u { font-size: 25px; text-decoration: underline; text-underline-offset: 6px; text-decoration-thickness: 2px; color: #444; font-weight: 300; }
.align { width: 324px; }
.align .top { padding-left: 30px; grid-template-columns: 52px 42px 64px 25px 47px 14px; }
.align .bottom { padding-left: 30px; grid-template-columns: 52px 52px 54px 28px 52px 30px; }
.ln { width: 28px; height: 32px; fill: none; stroke: #333; stroke-width: 2.2; }
.ln .blue { stroke: #1e8bcd; stroke-width: 2.4; }
.pressed { width: 48px; height: 48px; border-radius: 8px; background: #c5c5c5; border: 1px solid #b5b5b5; display: grid; place-content: center; }
.wrap { width: 278px; }
.wrap .top { padding-left: 28px; grid-template-columns: 41px 111px 14px; }
.wrap .bottom { padding-left: 24px; grid-template-columns: 45px 168px 14px; }
.number { width: 352px; }
.number .top { padding-left: 19px; }
.number .bottom { padding-left: 27px; grid-template-columns: 46px 31px 61px 46px 26px 52px 32px; }
.dec { font: 17px Inter, sans-serif; fill: #444; letter-spacing: -.8px; }
.dec path { fill: none; stroke: #1e8bcd; stroke-width: 2.4; }
.styles { width: 364px; padding-left: 29px; display: grid; grid-template-columns: 114px 100px 100px; }
.styles .big:first-child .art { padding-left: 10px; }
.cells { width: 338px; padding-left: 17px; display: grid; grid-template-columns: 100px 100px 100px; }
.editing { width: 422px; padding-left: 26px; display: grid; grid-template-columns: 175px 98px 100px; }
.editing .art { padding-left: 10px; }
.sens { width: 154px; padding-left: 25px; }
.dim { color: #8b8b8b; }
.dim .chev { color: #b3b3b3; }
.addins { width: 130px; padding-left: 13px; }
.addins .art { padding-left: 20px; }
.analyse { width: 182px; padding-left: 12px; border: 0; }
.analyse .art { padding-left: 17px; }

/* formula bar */
.formula { flex: none; height: 52px; background: #fdfdfd; display: grid; align-items: center; grid-template-columns: 199px 56px 61px 43px 2971px 20px; }
.namebox { width: 172px; height: 52px; background: #fff; border: 2px solid #b5b5b5; border-bottom: 0; border-left: 1px solid #c4c4c4; display: flex; align-items: center; justify-content: space-between; padding: 0 3px 3px 19px; font-size: 24px; letter-spacing: -1px; }
.fx { font: italic 34px "Liberation Serif", serif; color: #333; padding-left: 4px; }
.fsep { width: 2px; height: 30px; background: #dcdcdc; margin-left: 1px; }
.formula svg:last-child { margin-left: -1px; }
.splitter { flex: none; height: 6px; background: #e9e9e9; border-top: 2px solid #9e9e9e; border-bottom: 2px solid #9e9e9e; }

/* sheet */
.sheet { flex: none; height: 1532px; overflow: hidden; background: #fff; font-family: Lato, "Open Sans", sans-serif; font-size: 10.600px; line-height: 16px; color: #000; position: relative; white-space: pre; }
.r {
  display: grid; height: 16px;
  grid-template-columns: 24px 56px 116px 112px 144px 202px 146px 224px 56px 146px 110px 136px 194px 74px 102px 458px 204px 272px 90px repeat(8, 56px) 56px;
}
.cols { height: 24px; background: linear-gradient(#fff, #f2f2f2); border-bottom: 2px solid #b4b4b4; color: #666; font-size: 10.500px; line-height: 20px; text-align: center; }
.cols > * { border-right: 2px solid #e2e2e2; }
.cols .sel { background: #ebebeb; color: #217346; box-shadow: inset 0 -2px #217346, 0 2px #217346; border-color: #ebebeb; z-index: 1; }
.corner { padding: 8px 3px 0 0; display: flex; justify-content: flex-end; }
.h20 { height: 20px; line-height: 20px; }
.h272 { height: 272px; }
.n { border-right: 2px solid #b4b4b4; border-bottom: 1px solid #ececec; background: #fafafa; color: #5a5a5a; font-size: 11px; display: flex; align-items: flex-end; justify-content: center; padding-left: 2px; letter-spacing: -.2px; }
.h272 .n { background: #f0f0f0; color: #217346; border-right: 4px solid #217346; padding-left: 4px; }
.c { border-right: 2px solid #d4d4d4; border-bottom: 2px solid #d4d4d4; padding-left: 2px; overflow: hidden; min-width: 0; -webkit-text-stroke: .2px #000; }
.id { letter-spacing: -.09px; }
.key { letter-spacing: .08px; }
.name { letter-spacing: .15px; }
.url { letter-spacing: .19px; }
.copy { letter-spacing: .07px; }
.lic { letter-spacing: -.01px; }
.num { text-align: right; padding-right: 2px; }
.fill { margin: -2px 0 0 -2px; padding: 2px 0 0 4px; font-weight: 700; z-index: 1; overflow: visible; border: 0; }
.tan { background: #ddd9c4; } .sky { background: #daeef3; } .olive { background: #ebf1de; }
.peach { background: #fde9d9; text-align: center; letter-spacing: .23px; }
.big-text { font-size: 12.600px; letter-spacing: 0; }
.title-text { font-size: 13px; letter-spacing: .16px; }
.desc { letter-spacing: .04px; }
.selection { position: absolute; left: 651px; top: 116px; width: 151px; height: 278px; border: 4px solid #217346; z-index: 2; }
.selection::after { content: ""; position: absolute; right: -7px; bottom: -7px; width: 12px; height: 12px; background: #217346; box-shadow: -2px -2px #fff, -2px 0 #fff, 0 -2px #fff; }

/* sheet tabs */
.sheets { flex: none; height: 54px; border-top: 2px solid #cfcfcf; border-bottom: 2px solid #a3a3a3; background: linear-gradient(#e8e8e8, #f0f0f0 8px); display: grid; align-items: center; padding-left: 31px; grid-template-columns: 45px 46px 184px 48px 4px; }
.sheet-tab { width: 157px; height: 44px; align-self: start; margin-top: -2px; background: #fff; border-radius: 0 0 4px 4px; border-bottom: 2px solid #a5a5a5; box-shadow: 0 1px 3px rgba(0,0,0,.35); text-align: center; line-height: 49px; font-size: 24.500px; font-weight: 600; letter-spacing: -.3px; color: #1f8150; clip-path: inset(0 -4px -6px -4px); }
.tsep { width: 2px; height: 44px; background: #d0d0d0; align-self: start; }

/* status bar */
.status { flex: none; height: 44px; background: linear-gradient(#e3e3e3, #d6d6d6); display: grid; align-items: center; padding-left: 48px; font-size: 24px; letter-spacing: -.07px; color: #5a5a5a; white-space: nowrap; grid-template-columns: 110px 36px 2529px 95px 71px 65px 30px 212px 58px 60px; }
.status span { margin-top: -2px; }
.view { width: 72px; height: 44px; background: #a2a2a2; display: grid; place-content: center; }
.track { position: relative; width: 200px; height: 7px; border-radius: 4px; background: #9b9b9b; }
.tick { position: absolute; left: 99px; top: 1px; width: 3px; height: 5px; background: #ddd; }
.thumb { position: absolute; left: 40px; top: -13px; width: 32px; height: 32px; border-radius: 50%; background: #fff; box-shadow: 0 1px 2px rgba(0,0,0,.35); }
.status .pct { letter-spacing: -.4px; }
```

FILE: sheet.js
```js
// Each record: name, family, then "id|key" pairs; an optional fourth field overrides the title column.
const RECORDS = [
  ["Rhea americana", "Rheidae", "AVES_2000-14765|7d1264cca2e93009237e AVES_2000-14765|46e9071723ddbababd06"],
  ["Struthio camelus", "Struthionidae", "AVES_2000-31350|cd50680edb26a356d7f1 AVES_2000-31350|1af8bb8651519838f87c"],
  ["Struthio molybdophanes", "Struthionidae", "AVES_2000-31351|b2d8c2a150d82453d35c"],
  ["Rhea americana", "Rheidae", "AVES_2000-31795|203c28c34cfcaebcdf40"],
  ["Rhea pennata", "Rheidae", "AVES_2000-32382|a15390298ac1655e3edf"],
  ["Struthio camelus", "Struthionidae", "AVES_2000-34658|7c49b1ed7b7518d4b4fa"],
  ["Rhea americana", "Rheidae", "AVES_2000-34923|7034d61a513ff21894c9 AVES_2000-34923|526aa68efd3d77d880a9"],
  ["Struthio camelus", "Struthionidae", "AVES_2000-632|be287cd1a951002e5b23"],
  ["Casuarius unappendiculatus", "Casuariidae", "AVES_2000-752|a65ef3540a65f4d0e797 AVES_2000-752|7c3350dacaa7ff313773"],
  ["Struthio camelus", "Struthionidae", "AVES_2000-8516|37a6083ae55aecc1a6d3"],
  ["Alectoris chukar", "Phasianidae", "Aves_10|637ac9b989fc050552c2 Aves_10|05010ad358de321f893b"],
  ["Calidris maritima", "Scolopacidae", "Aves_100|16df0bcfc23f233dc609 Aves_100|da45fa89d0c6b22c0e9d"],
  ["Psittacula alexandri alexandri", "Psittacidae", "Aves_10007|d4b390937620f4340606 Aves_10007|603316650acf99caab27"],
  ["Alisterus scapularis scapularis", "Psittacidae", "Aves_10051|36ca825c89897a4c0d83 Aves_10051|cb76e051e358dc26df99"],
  ["Falco pelegrinoides pelegrinoides", "Falconidae", "Aves_1006|38ea6e0a6bed5dd3bf77 Aves_1006|3cee9a4bb49055dcc214", "Falco peregrinus"],
  ["Trichoglossus moluccanus moluccanus", "Psittacidae", "Aves_10066|4c5c1854525aac92a370 Aves_10066|570fa8c14c0c391fb85e Aves_10067|e56b79cdc2071797698a Aves_10067|dcfcff68c065cc12f2e5 Aves_10068|c1a33f997ec6398133b9 Aves_10068|2f00fa4a9ea583f4efbf"],
  ["Trichoglossus ornatus", "Psittacidae", "Aves_10073|a2e692e115e7e8de8175 Aves_10073|99dd0e92c1135e041af8"],
  ["Falco peregrinus anatum", "Falconidae", "Aves_1009|988e20d08f57acf0c1c0 Aves_1009|4cd953c32f183fc9368b"],
  ["Alectoris barbara barbara", "Phasianidae", "Aves_101|44f8a82147756d357297 Aves_101|bb7280f0d137b8ba20ee"],
  ["Strigops habroptila", "Strigopidae", "Aves_10101|51acd1c778e6eec9f0fb Aves_10101|242e710d0f2981202ce9 Aves_10101|2021cfc9a51fd6935ad1"],
  ["Falco peregrinus", "Falconidae", "Aves_1012|f7325f2d342af4d42c55 Aves_1012|49ccd6cf22a8c9510a10 Aves_1013|c385a820ef694b45b44c Aves_1013|432f186a605d8580f3bf Aves_1015|8b0a8f3e0373ceeed037 Aves_1015|fa63ec304332cc59c580 Aves_1016|6d60953b2a1307c6eb08 Aves_1016|460fda494880b47c2fea Aves_1017|023b9dc790f3f36dfc60 Aves_1017|996e5b7906ecc9508f41 Aves_1019|bfe385ea858874d3d33b Aves_1019|e888cf565bc7616b591d"],
  ["Podiceps auritus auritus", "Podicipedidae", "Aves_102|5da23f414054658c4216 Aves_102|95014cd7dadb610150d2"],
  ["Falco peregrinus peregrinus", "Falconidae", "Aves_1020|a2202c6c4af17c47be27 Aves_1020|ed8e55bac64db05caebb"],
  ["Psittacara euops", "Psittacidae", "Aves_10206|d598c91b14a398bfee08 Aves_10206|e1a3712105425ed86d33"],
  ["Cyanoliseus patagonus bloxami", "Psittacidae", "Aves_10220|2533e95a6f495f0abc1d Aves_10220|ccc34f883dbce5044be5"],
  ["Falco peregrinus anatum", "Falconidae", "Aves_1023|7ee9ebd2f02cb225d3c1 Aves_1023|d1b911ddeb8dfff0c173"],
  ["Falco peregrinus peregrinus", "Falconidae", "Aves_1024|a403909e9c3a43b06564 Aves_1024|0e9d75cce470a5949302 Aves_1026|797e4f6281a6a7c52d4d Aves_1026|37edb25b2fad37723ad6"],
  ["Falco peregrinus anatum", "Falconidae", "Aves_1027|7b945bcbf16cbddaeb33"]
];
const COLS = [..."ABCDEFGHIJKLMNOPQRSTUVWXYZ", "AA"];
const html = [];
const cell = (cls, text = "", span = 1) =>
  `<div class="c ${cls}"${span > 1 ? ` style="grid-column:span ${span}"` : ""}>${text}</div>`;
const blanks = n => cell("").repeat(n);
let n = 0;
const row = (cls, body) => html.push(`<div class="r ${cls}"><div class="n">${++n}</div>${body}</div>`);

html.push(`<div class="r cols"><div class="corner"><svg width="9" height="11" viewBox="0 0 9 11"><path d="M9 0v11H0z" fill="#d0d0d0"/></svg></div>` +
  COLS.map(c => `<div${c === "F" ? ' class="sel"' : ""}>${c}</div>`).join("") + "</div>");

row("", blanks(27));
row("h20", blanks(1) + cell("fill tan big-text", "Dataset title") + blanks(25));
row("h20", blanks(1) + cell("title-text", "Mounted Specimens of the Historical Bird Collection at the Museum für Naturkunde Berlin", 4) + blanks(22));
row("h20", blanks(27));
row("h20", blanks(1) + cell("fill sky big-text", "Dataset Description/Abstract", 2) + blanks(1) + cell("fill olive big-text", "Data license") + blanks(22));
row("h272", blanks(1) +
  cell("desc", "The dataset contains\nmetadata for over\n13000 images of\nmounted bird\nspecimens belonging to\nthe bird collection of\nthe Museum für\nNaturkunde Berlin\n(MfN).\nThe mounted\nspecimens were mostly\ncollected in the 19th\ncentury and have now\nbeen systematically\nphotographed.") +
  cell("desc", "The images are\navailable under a free\nlicense\n(https://portal.museu\nmfuernaturkunde.ber\nlin/collection/birds).\nFor large part of the\nmounted specimens\nthe full taxonomy is\navailable. When this is\nnot the case, the\nspecimens are\nidentified with their\nGerman common\nnames.") +
  blanks(1) + cell("desc", "CC0 Public Domain Dedication") + blanks(22));
row("h20", blanks(27));
row("h20", blanks(27));
row("", blanks(27));

const heads = [["catalogue", "id"], ["key"], ["scientific", "name"], ["title", "(scientific name or common name)"], ["class"], ["family"], ["genus"], ["species"], ["subspecies"], ["collections"], ["creation", "year"], ["absolute", "url"], ["copyright"], ["license"], ["authors"]];
for (const line of [0, 1])
  row("", blanks(3) + heads.map(h => cell("fill peach", h[line] || "")).join("") + blanks(9));

for (const [name, family, items, title] of RECORDS)
  for (const item of items.split(" ")) {
    const [id, key] = item.split("|");
    const w = name.split(" ");
    row("", blanks(3) + cell("id", "ZMB_" + id) + cell("key", key) + cell("name", name) + cell("name", title || name) +
      cell("name", "Aves") + cell("name", family) + cell("name", w[0]) + cell("name", w[0] + " " + w[1]) +
      cell("name", w[2] ? name : "") + cell("name", "Birds") + cell("num", "2023") +
      cell("url", "https://portal.museumfuernaturkunde.berlin/detail/" + key) +
      cell("copy", "MfN Berlin, https://ror.org/052d1a351") + cell("lic", "CC0 1.0 Creative Commons Public Domain Dedication") +
      cell("name", "MfN Digitization") + blanks(9));
  }
html.push('<div class="selection"></div>');
document.getElementById("sheet").innerHTML = html.join("");
```
